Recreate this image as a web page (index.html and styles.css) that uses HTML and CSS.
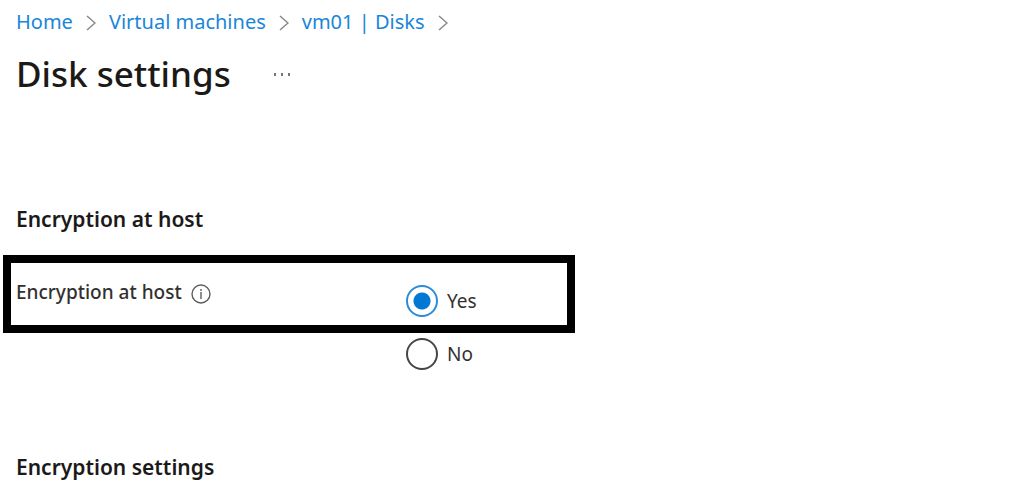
FILE: index.html
```html
<!DOCTYPE html>
<html lang="en">
<head>
    <meta charset="UTF-8">
    <meta name="viewport" content="width=device-width, initial-scale=1.0">
    <title>Disk settings</title>
    <link rel="stylesheet" href="styles.css">
</head>
<body>

<nav class="breadcrumb">
    <a href="#">Home</a>
    <svg class="chevron" viewBox="0 0 10 16"><path d="M1 1l8 7-8 7"/></svg>
    <a href="#">Virtual machines</a>
    <svg class="chevron" viewBox="0 0 10 16"><path d="M1 1l8 7-8 7"/></svg>
    <a href="#">vm01 | Disks</a>
    <svg class="chevron" viewBox="0 0 10 16"><path d="M1 1l8 7-8 7"/></svg>
</nav>

<header class="page-header">
    <h1>Disk settings</h1>
    <button class="more" type="button" aria-label="More actions">
        <svg viewBox="0 0 20 4"><path d="M1 1h2v3H1zM8 1h2v3H8zM15 1h2v3h-2z"/></svg>
    </button>
</header>

<main>
    <h2>Encryption at host</h2>

    <!-- Encryption at host choice -->
    <div class="options" role="radiogroup" aria-labelledby="host-label">
        <div class="row highlight">
            <span class="label" id="host-label">Encryption at host
                <svg class="info" viewBox="0 0 20 20"><circle cx="10" cy="10" r="9"/><path d="M10 8v7M10 5v2"/></svg>
            </span>
            <label class="choice"><input type="radio" name="host" value="yes" checked>Yes</label>
        </div>
        <div class="row">
            <label class="choice"><input type="radio" name="host" value="no">No</label>
        </div>
    </div>

    <h2>Encryption settings</h2>
</main>

</body>
</html>
```

FILE: styles.css
```css
body {
    font-family: "Noto Sans", "Open Sans", sans-serif;
    margin: 0;
    padding: 8px 16px;
    background: #fff;
    color: #1b1a19;
    font-size: 20px;
}
.breadcrumb {
    display: flex;
    align-items: center;
    gap: 13px;
    line-height: 28px;
}
.breadcrumb a {
    color: #1a86d9;
    text-decoration: none;
}
.chevron {
    width: 10px;
    height: 16px;
    margin-top: 2px;
    fill: none;
    stroke: #8a8886;
    stroke-width: 1.5;
}
.page-header {
    display: flex;
    align-items: center;
    gap: 42px;
    margin-top: 12px;
}
h1 {
    margin: 0;
    font-size: 35px;
    font-weight: 500;
    line-height: 52px;
}
.more {
    display: flex;
    padding: 0;
    border: 0;
    background: none;
}
.more svg {
    width: 20px;
    height: 4px;
    fill: #777;
}
main {
    margin-top: 104px;
}
h2 {
    margin: 0;
    font-size: 21px;
    font-weight: 600;
    line-height: 30px;
}
.options {
    margin: 21px 0 82px -13px;
}
.row {
    display: grid;
    grid-template-columns: 390px auto;
    box-sizing: border-box;
    max-width: 572px;
    padding: 5px 13px 0;
}
.highlight {
    padding: 22px 5px 8px;
    border: 8px solid #000;
}
.label {
    display: flex;
    align-items: center;
    gap: 9px;
    height: 14px;
    color: #323130;
    font-size: 19px;
    font-weight: 500;
}
.info {
    width: 20px;
    height: 20px;
    margin-top: 4px;
    fill: none;
    stroke: #605e5c;
    stroke-width: 1.4;
}
.choice {
    display: flex;
    grid-column: 2;
    align-items: center;
    gap: 9px;
    color: #323130;
    font-size: 19px;
    line-height: 32px;
}
input {
    appearance: none;
    width: 32px;
    height: 32px;
    margin: 0;
    border: 2px solid #484644;
    border-radius: 50%;
}
input:checked {
    border-color: #2b8cda;
    background: radial-gradient(circle, #0078d4 8px, transparent 9px);
}
```
